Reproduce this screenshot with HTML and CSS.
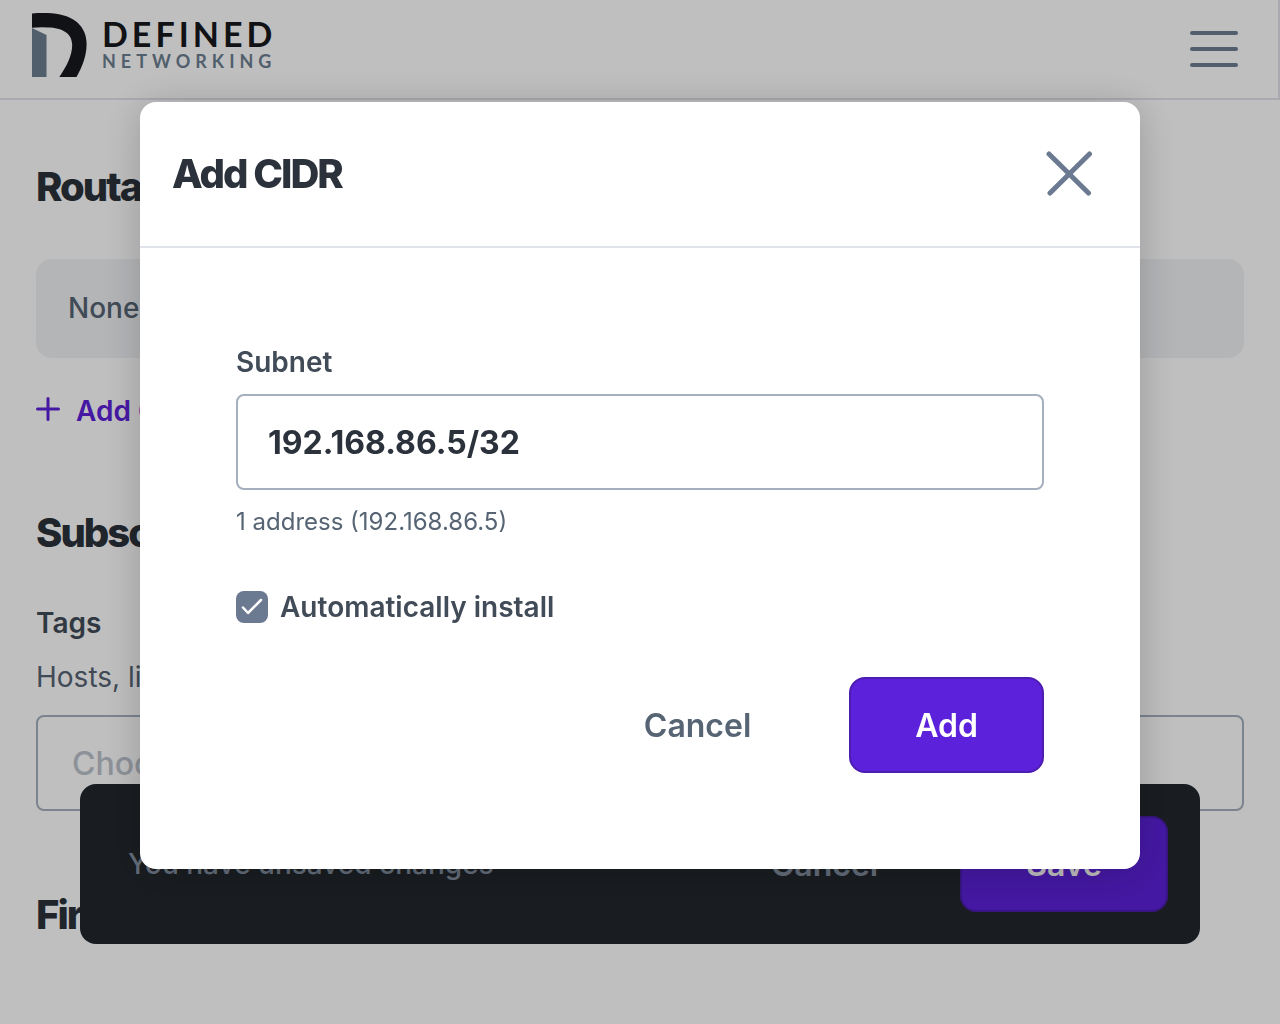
FILE: index.html
```html
<!DOCTYPE html>
<html lang="en">
<head>
    <meta charset="UTF-8">
    <meta name="viewport" content="width=device-width, initial-scale=1.0">
    <title>Defined Networking</title>
    <link rel="stylesheet" href="styles.css">
</head>
<body>

<header class="site-header">
    <a class="logo" href="#" aria-label="Defined Networking">
        <svg class="logo-mark" width="56" height="64" viewBox="0 0 56 64">
            <path fill="#6d7f92" d="M0 15 L14.500 22 V64 H0Z"/>
            <path fill="#17191d" d="M0 0.400C10-.2 20-.2 28 1.500C44 4.500 54.600 15 54.600 31C54.600 43 50 54.500 44.500 64H27.300C34 54 40.200 43 40.200 32C40.200 20 30 14.700 16 14.400Q7 14 0 14.700Z"/>
        </svg>
        <span class="logo-text">
            <span class="logo-name">DEFINED</span>
            <span class="logo-sub">NETWORKING</span>
        </span>
    </a>
    <button class="menu-btn" type="button" aria-label="Menu">
        <svg width="48" height="36" viewBox="0 0 48 36" stroke="#6d7f92" stroke-width="4" stroke-linecap="round">
            <path d="M2 2H46M2 18H46M2 34H46"/>
        </svg>
    </button>
</header>

<main class="page">
    <section class="section">
        <h2 class="title">Routable CIDRs</h2>
        <p class="empty-box">None</p>
        <button class="add-link" type="button">
            <svg width="24" height="28" viewBox="0 0 24 28" stroke="#5c21db" stroke-width="3" stroke-linecap="round">
                <path d="M12 1.500V22.500M1.500 12H22.500"/>
            </svg>
            Add CIDR
        </button>
    </section>

    <section class="section">
        <h2 class="title">Subscriptions</h2>
        <label class="label" for="tags">Tags</label>
        <p class="help">Hosts, lighthouses, and relays</p>
        <input class="field tags-field" id="tags" type="text" placeholder="Choose tags">
    </section>

    <section class="section">
        <h2 class="title">Firewall rules</h2>
    </section>
</main>

<div class="save-bar">
    <p class="save-text">You have unsaved changes</p>
    <button class="btn btn-plain" type="button">Cancel</button>
    <button class="btn btn-primary" type="button">Save</button>
</div>

<div class="overlay">
    <div class="modal" role="dialog" aria-modal="true" aria-labelledby="modal-title">
        <div class="modal-header">
            <h2 class="title" id="modal-title">Add CIDR</h2>
            <button class="close-btn" type="button" aria-label="Close">
                <svg width="46" height="46" viewBox="0 0 46 46" stroke="#6b7a91" stroke-width="5" stroke-linecap="round">
                    <path d="M3 3L42.500 42M43.500 3L4 42"/>
                </svg>
            </button>
        </div>
        <form class="modal-body">
            <label class="label" for="subnet">Subnet</label>
            <input class="field" id="subnet" type="text" value="192.168.86.5/32">
            <p class="hint">1 address (192.168.86.5)</p>
            <div class="check-row">
                <input class="checkbox" id="auto-install" type="checkbox" checked>
                <label class="label" for="auto-install">Automatically install</label>
            </div>
            <div class="actions">
                <button class="btn btn-plain" type="button">Cancel</button>
                <button class="btn btn-primary" type="button">Add</button>
            </div>
        </form>
    </div>
</div>

</body>
</html>
```
FILE: styles.css
```css
* {
    box-sizing: border-box;
    margin: 0;
    padding: 0;
}

body {
    font-family: Inter, sans-serif;
    font-size: 28px;
    line-height: 36px;
    color: #414c58;
    background: #fff;
}

button,
input {
    font-family: inherit;
}

button {
    background: none;
    border: none;
    cursor: pointer;
}

svg {
    display: block;
    fill: none;
}

/* header */
.site-header {
    display: flex;
    justify-content: space-between;
    align-items: center;
    padding: 13px 40px 21px 32px;
    border-right: 2px solid #e2e3ea;
    border-bottom: 2px solid #e2e3ea;
}

.logo {
    display: flex;
    align-items: center;
    gap: 14px;
    text-decoration: none;
    font-family: Lato, sans-serif;
    font-weight: 700;
}

.logo-text {
    display: flex;
    flex-direction: column;
    padding-bottom: 2px;
}

.logo-name {
    font-size: 34px;
    line-height: 34px;
    letter-spacing: 4px;
    color: #17191d;
}

.logo-sub {
    font-size: 18px;
    line-height: 20px;
    letter-spacing: 5px;
    color: #6d7f92;
}

.menu-btn {
    padding-top: 8px;
}

/* page */
.page {
    padding: 63px 36px 32px;
}

.section {
    margin-bottom: 80px;
}

.section:last-child {
    margin-bottom: 0;
}

.title {
    font-size: 40px;
    line-height: 48px;
    font-weight: 800;
    letter-spacing: -2px;
    color: #2b323b;
}

.section .title {
    margin-bottom: 48px;
}

.section:last-child .title {
    margin-bottom: 0;
}

.label {
    display: block;
    font-weight: 600;
}

.empty-box {
    padding: 32px;
    margin-bottom: 35px;
    border-radius: 16px;
    background: #f0f2f5;
    color: #566474;
    font-weight: 500;
    line-height: 35px;
}

.add-link {
    display: flex;
    align-items: center;
    gap: 16px;
    font-size: 28px;
    line-height: 36px;
    font-weight: 600;
    color: #5c21db;
}

.help {
    margin: 18px 0 20px;
    color: #566474;
}

.field {
    display: block;
    width: 100%;
    height: 96px;
    padding: 0 30px;
    border: 2px solid #a5b0be;
    border-radius: 8px;
    background: #fff;
    font-size: 32px;
    font-weight: 700;
    color: #2b323b;
}

.tags-field {
    padding: 0 34px;
    font-weight: 500;
}

.tags-field::placeholder {
    color: #bcc3cd;
}

/* buttons */
.btn {
    height: 96px;
    padding: 0 64px;
    border: 2px solid transparent;
    border-radius: 16px;
    font-size: 32px;
    font-weight: 600;
}

.btn-plain {
    color: #566474;
}

.btn-primary {
    background: #5c21db;
    border-color: #4c1db0;
    color: #fff;
}

/* unsaved changes bar */
.save-bar {
    position: fixed;
    left: 80px;
    right: 80px;
    bottom: 80px;
    display: flex;
    align-items: center;
    gap: 16px;
    padding: 32px 32px 32px 48px;
    border-radius: 16px;
    background: #22272c;
}

.save-text {
    flex: 1;
    color: #8591a3;
    font-weight: 500;
}

.save-bar .btn-plain {
    color: #8591a3;
}

/* modal */
.overlay {
    position: fixed;
    inset: 0;
    padding: 102px 140px;
    background: rgba(0, 0, 0, 0.25);
}

.modal {
    max-width: 1000px;
    margin: 0 auto;
    border-radius: 16px;
    background: #fff;
    box-shadow: 0 4px 40px rgba(0, 0, 0, 0.2);
}

.modal-header {
    display: flex;
    justify-content: space-between;
    align-items: center;
    padding: 48px 48px 48px 32px;
    border-bottom: 2px solid #e0e4ea;
}

.modal-body {
    padding: 96px;
}

.modal-body .field {
    margin: 14px 0 16px;
}

.hint {
    font-size: 24px;
    line-height: 32px;
    color: #566474;
}

.check-row {
    display: flex;
    align-items: center;
    gap: 12px;
    margin: 51px 0 52px;
}

.checkbox {
    appearance: none;
    width: 32px;
    height: 32px;
    border-radius: 8px;
    background: #6b7a91 url("data:image/svg+xml,%3Csvg xmlns='http://www.w3.org/2000/svg' viewBox='0 0 32 32' fill='none' stroke='white' stroke-width='2.5' stroke-linecap='round' stroke-linejoin='round'%3E%3Cpath d='M7 16.500L12 22L25 9'/%3E%3C/svg%3E");
}

.actions {
    display: flex;
    justify-content: flex-end;
    gap: 32px;
}
```
